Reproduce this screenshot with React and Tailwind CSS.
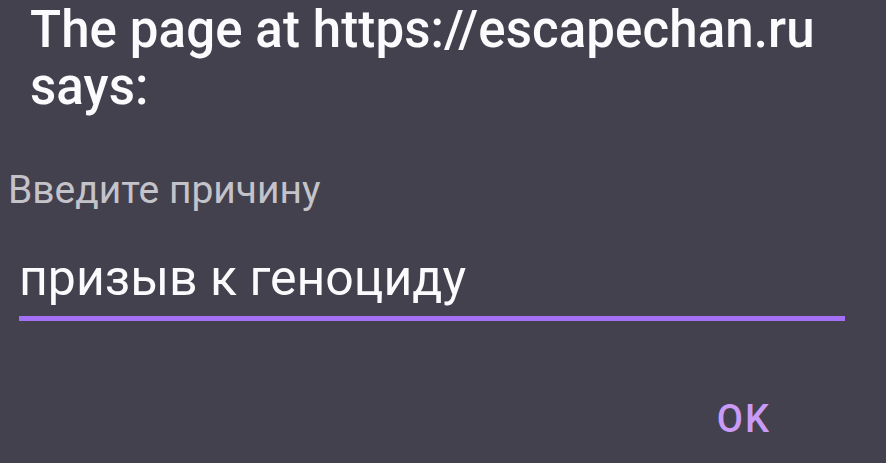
export default function App() {
  return (
    <div className="w-[886px] h-[463px] bg-[#43414d] overflow-hidden flex flex-col" style={{ fontFamily: "Roboto, 'Noto Sans', sans-serif" }}>
      <div className="pl-[30px] pr-[20px] pt-[1px] text-[51px] leading-[57px] font-medium tracking-[0.1px] text-[#fbfafd]">
        The page at https://escapechan.ru says:
      </div>
      <div className="mt-[56px] pl-[8px] text-[39px] leading-[39px] text-[#c5c3ca]">
        Введите причину
      </div>
      <div className="mt-[43px] ml-[19px] mr-[41px] flex flex-col">
        <div className="text-[50px] leading-[50px] text-[#fbfafd]">призыв к геноциду</div>
        <div className="mt-[13px] h-[5px] bg-[#a470f6]"></div>
      </div>
      <div className="mt-[80px] flex justify-end pr-[115px]">
        <span className="text-[38px] leading-[37px] font-medium tracking-[2px] text-[#c99bf7]">OK</span>
      </div>
    </div>
  );
}
